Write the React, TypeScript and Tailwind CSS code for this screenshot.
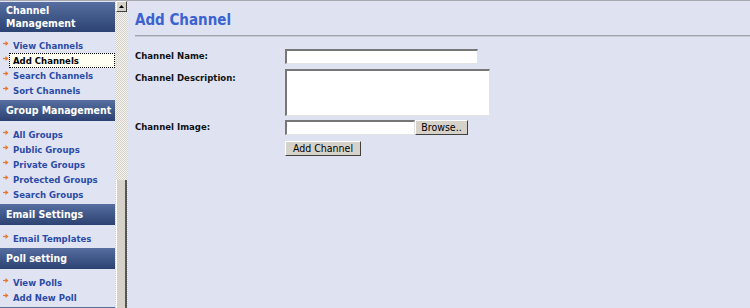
import React from "react";

const FONT = { fontFamily: '"DejaVu Sans Condensed", "DejaVu Sans", Tahoma, sans-serif' };

function Arrow() {
  return (
    <svg width="6" height="6" viewBox="0 0 6 6" className="shrink-0">
      <path d="M0 3.5 H4" stroke="#e8772e" strokeWidth="1.2" />
      <path d="M2.5 1 L5.5 3.5 L2.5 6 Z" fill="#e8772e" />
    </svg>
  );
}

function NavItem({ label, active }: { label: string; active?: boolean }) {
  return (
    <div className="h-[15px] flex items-center relative">
      <div className="w-[13px] pl-[3px] flex items-start h-full pt-[2px]">
        <Arrow />
      </div>
      {active ? (
        <div className="absolute left-[9px] right-0 top-0 bottom-0 border border-dotted border-black bg-[#fffff2] flex items-center pl-[3px]">
          <span className="text-[9.5px] font-bold text-black leading-none">{label}</span>
        </div>
      ) : (
        <span className="text-[9.5px] font-bold text-[#2b4ba8] leading-none">{label}</span>
      )}
    </div>
  );
}

function Header({ children, tall }: { children?: React.ReactNode; tall?: boolean }) {
  return (
    <div
      className={`bg-gradient-to-b from-[#566fa0] to-[#2c4272] text-white font-bold text-[10.5px] whitespace-nowrap px-[6px] flex items-center ${
        tall ? "h-[30px] leading-[13px]" : "h-[21px]"
      }`}
    >
      {children}
    </div>
  );
}

function Section({ title, items, active, tall }: { title: React.ReactNode; items: string[]; active?: string; tall?: boolean }) {
  return (
    <div>
      <Header tall={tall}>{title}</Header>
      <div className="pt-[6px] pb-[2px]">
        {items.map((it) => (
          <NavItem key={it} label={it} active={it === active} />
        ))}
      </div>
    </div>
  );
}

function Field({ w, h }: { w: string; h: string }) {
  return (
    <div
      className={`${w} ${h} bg-white border-t-2 border-l-2 border-b border-r border-t-[#777] border-l-[#777] border-b-[#e4e4e4] border-r-[#e4e4e4]`}
    />
  );
}

function Btn({ label, w }: { label: string; w: string }) {
  return (
    <div
      className={`${w} h-[15px] bg-[#d6d2ca] border border-t-white border-l-white border-b-[#404040] border-r-[#404040] flex items-center justify-center text-[10.5px] font-normal text-black leading-none`}
    >
      {label}
    </div>
  );
}

export default function App() {
  return (
    <div className="w-[750px] h-[308px] overflow-hidden flex bg-[#dfe2f1] border-t border-t-[#a8a8b0]" style={FONT}>
      <div className="w-[115px] shrink-0 bg-[#e0e4f2] pt-[1px]">
        <Section
          tall
          title={
            <span>
              Channel
              <br />
              Management
            </span>
          }
          items={["View Channels", "Add Channels", "Search Channels", "Sort Channels"]}
          active="Add Channels"
        />
        <Section title="Group Management" items={["All Groups", "Public Groups", "Private Groups", "Protected Groups", "Search Groups"]} />
        <Section title="Email Settings" items={["Email Templates"]} />
        <Section title="Poll setting" items={["View Polls", "Add New Poll"]} />
        <Header />
      </div>
      <div className="w-[13px] shrink-0 flex flex-col bg-[repeating-conic-gradient(#f4f4f0_0_25%,#d4d0c8_0_50%)] bg-[length:2px_2px]">
        <div className="ml-[1px] w-[11px] h-[11px] bg-[#d6d2ca] border border-t-white border-l-white border-b-[#404040] border-r-[#404040] flex items-center justify-center">
          <svg width="5" height="3" viewBox="0 0 5 3">
            <path d="M2.5 0 L5 3 L0 3 Z" fill="#000" />
          </svg>
        </div>
        <div className="flex-1" />
        <div className="ml-[1px] w-[11px] h-[128px] bg-[#d6d2ca] border-l border-l-white border-r-2 border-r-[#555]" />
      </div>
      <div className="flex-1 pl-[7px]">
        <div className="h-[34px] flex items-center pt-[4px] text-[15px] font-bold text-[#3a63d0]">Add Channel</div>
        <div className="h-[2px] bg-[#9fa3b0] border-b border-b-[#c8cad4]" />
        <div className="pt-[12px] text-[9.5px] font-bold text-[#111]">
          <div className="flex items-center h-[15px]">
            <div className="w-[150px]">Channel Name:</div>
            <Field w="w-[193px]" h="h-[15px]" />
          </div>
          <div className="flex mt-[5px]">
            <div className="w-[150px] pt-[2px]">Channel Description:</div>
            <Field w="w-[205px]" h="h-[47px]" />
          </div>
          <div className="flex items-center mt-[4px] h-[15px]">
            <div className="w-[150px]">Channel Image:</div>
            <Field w="w-[130px]" h="h-[15px]" />
            <Btn label="Browse.." w="w-[53px]" />
          </div>
          <div className="flex mt-[6px]">
            <div className="w-[150px]" />
            <Btn label="Add Channel" w="w-[76px]" />
          </div>
        </div>
      </div>
    </div>
  );
}
